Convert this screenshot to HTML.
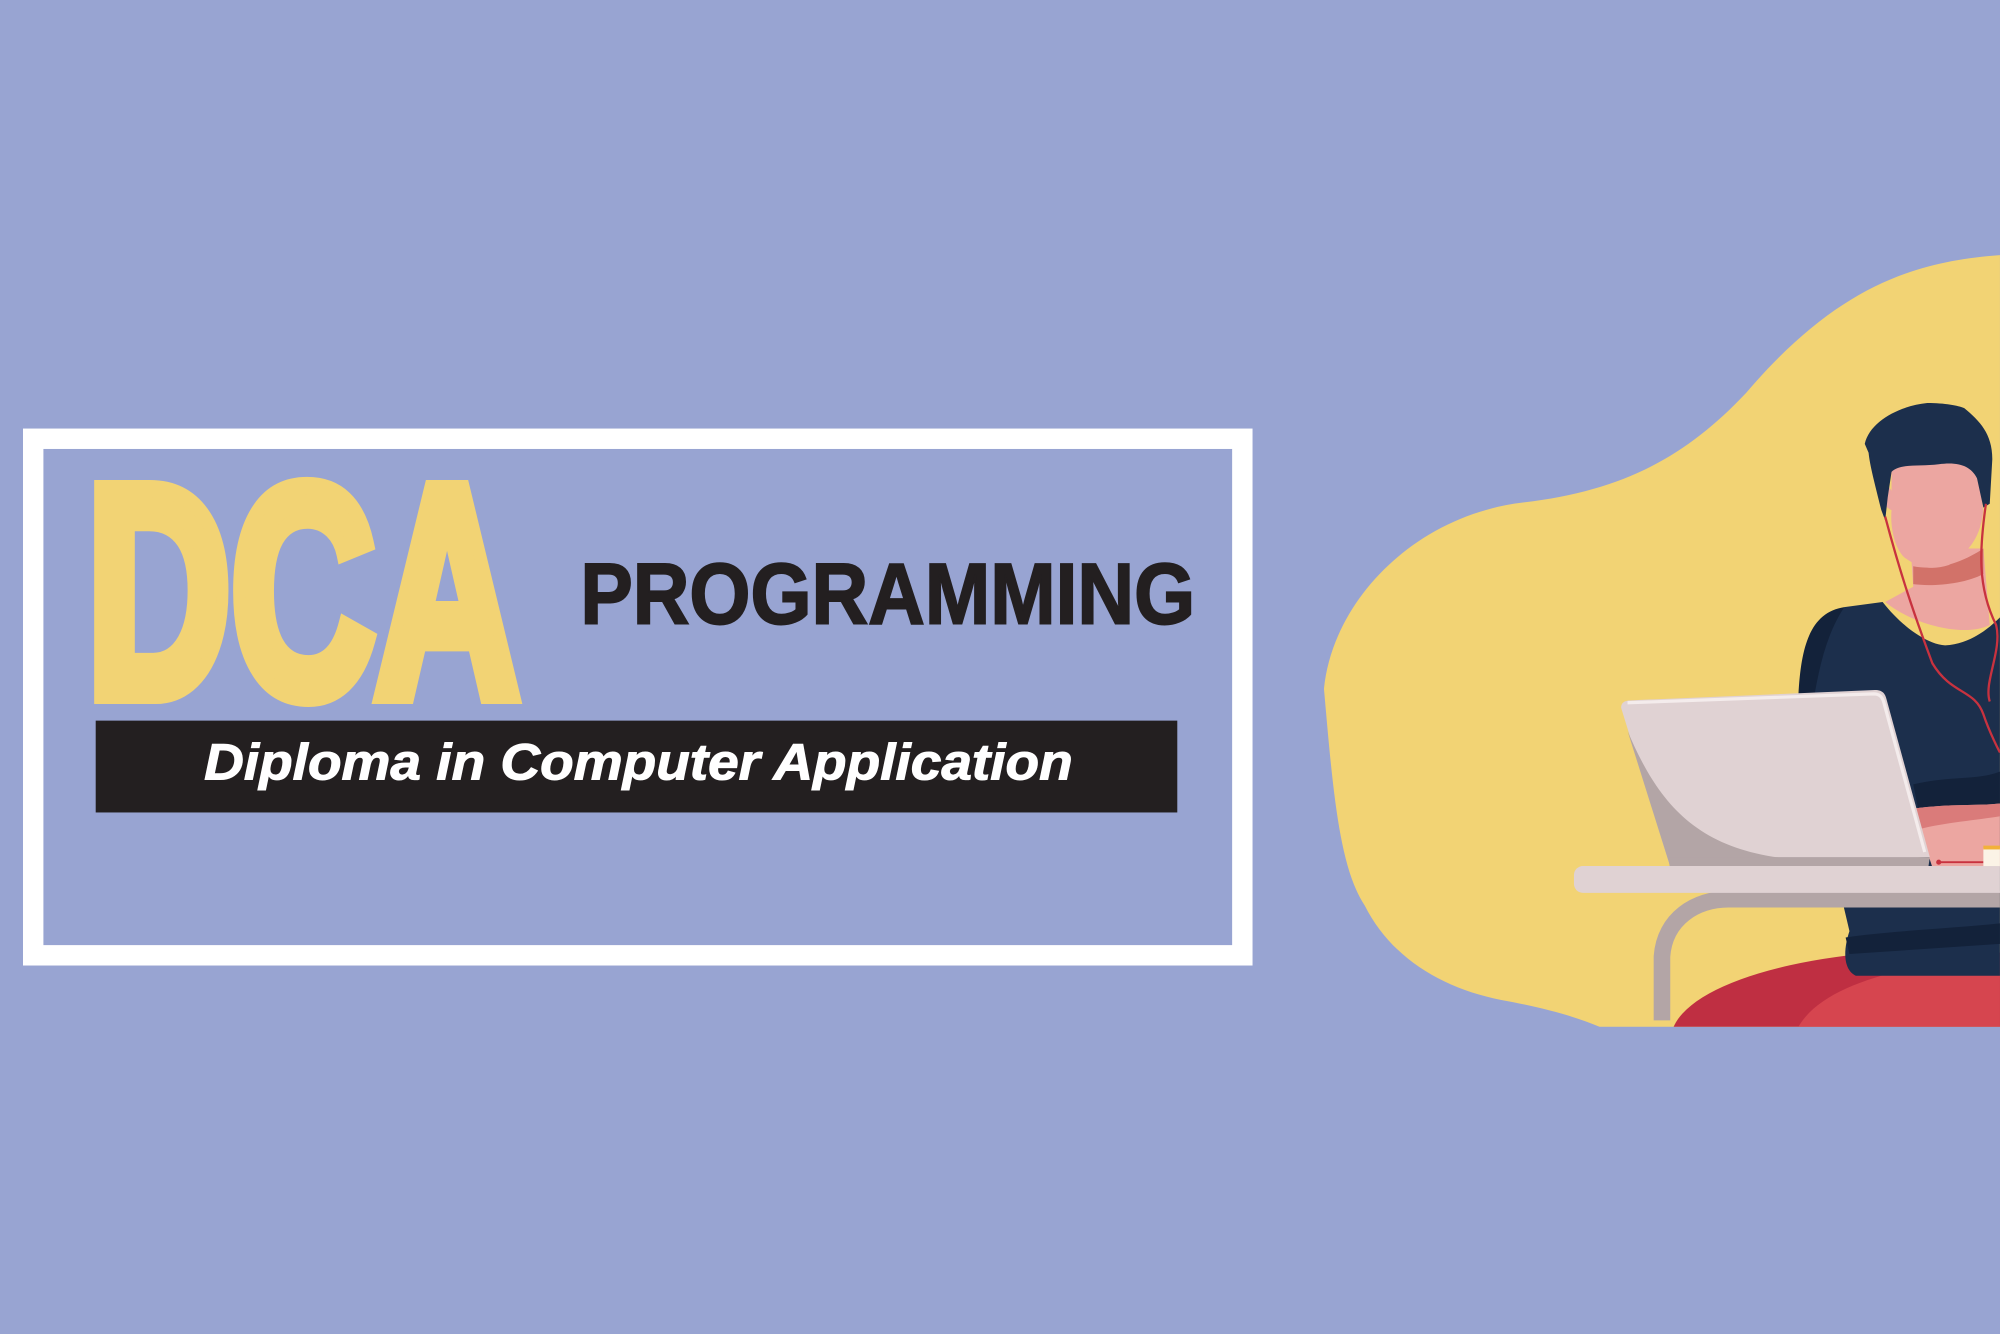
<!DOCTYPE html>
<html><head><meta charset="utf-8"><style>
html,body{margin:0;padding:0;background:#98A4D2;}
svg{display:block;width:2000px;height:1334px;}
</style></head><body>
<svg viewBox="0 0 1568 1045.9" xmlns="http://www.w3.org/2000/svg">
<rect width="1568" height="1046" fill="#98A4D2"/>
<rect x="26" y="344" width="948" height="405" fill="none" stroke="#fff" stroke-width="16"/>
<text x="68" y="545" font-family="Liberation Sans, sans-serif" font-weight="bold" font-size="235" fill="#F2D374" stroke="#F2D374" stroke-width="14" stroke-linejoin="miter" textLength="339" lengthAdjust="spacingAndGlyphs">DCA</text>
<text x="455" y="489" font-family="Liberation Sans, sans-serif" font-weight="bold" font-size="68" fill="#231F20" stroke="#231F20" stroke-width="1.5" textLength="482" lengthAdjust="spacingAndGlyphs">PROGRAMMING</text>
<rect x="75" y="565" width="848" height="72" fill="#231F20"/>
<text x="160" y="611" font-family="Liberation Sans, sans-serif" font-weight="bold" font-style="italic" font-size="40" fill="#fff" stroke="#fff" stroke-width="0.8" textLength="681" lengthAdjust="spacingAndGlyphs">Diploma in Computer Application</text>
<path d="M1568 200 C1500 205 1440 225 1369 308 C1320 360 1270 385 1194 394 C1110 404 1045 470 1038 540 C1045 620 1050 680 1070 710 C1090 750 1130 775 1177 784 C1210 790 1235 797 1254 805 L1568 805 Z" fill="#F2D374"/>
<clipPath id="c"><rect x="1000" y="190" width="568" height="615"/></clipPath>
<g clip-path="url(#c)">
<ellipse cx="1520" cy="815" rx="210" ry="70" fill="#BF2F42"/>
<path d="M1410 805 C1430 770 1500 755 1568 750 L1568 805 Z" fill="#D6454F"/>
<path d="M1498 430 L1555 430 L1560 490 C1540 500 1500 490 1478 472 L1500 460 Z" fill="#ECA6A1"/>
<path d="M1500 444 C1520 448 1540 440 1555 430 L1555 450 C1540 458 1515 460 1500 458 Z" fill="#D27269"/>
<path d="M1446 476 L1476 472 C1490 490 1510 505 1525 506 C1545 505 1560 492 1568 484 L1568 765 L1455 765 C1445 760 1445 745 1450 730 L1410 560 C1412 530 1415 495 1446 476 Z" fill="#1C2F4C"/>
<path d="M1446 476 C1420 480 1412 505 1410 545 L1420 560 C1425 530 1430 500 1446 476 Z" fill="#13223A"/>
<path d="M1500 615 C1530 608 1550 612 1568 605 L1568 640 L1505 640 Z" fill="#13223A"/>
<path d="M1447 735 C1480 730 1530 728 1568 724 L1568 740 L1450 748 Z" fill="#13223A"/>
<path d="M1500 634 C1530 630 1550 632 1568 630 L1568 680 L1515 680 Z" fill="#ECA6A1"/>
<path d="M1500 634 C1530 630 1550 632 1568 630 L1568 640 C1550 643 1525 645 1505 650 Z" fill="#DA7B7A"/>
<path d="M1483 360 C1500 355 1520 362 1548 357 L1555 400 C1553 420 1545 432 1528 443 C1515 447 1505 446 1493 437 C1484 428 1482 410 1483 400 C1478 398 1472 390 1474 386 C1476 380 1481 380 1483 385 Z" fill="#ECA6A1"/>
<path d="M1462 348 C1466 330 1490 318 1511 316 C1525 316 1535 318 1540 320 C1552 330 1562 340 1562 360 L1560 395 L1555 398 L1550 375 C1545 365 1535 362 1520 364 C1505 366 1490 363 1483 370 L1480 390 L1478 408 L1475 400 C1470 380 1466 365 1465 355 Z" fill="#1C2F4C"/>
<path d="M1478 405 C1490 450 1500 480 1515 520 C1530 545 1548 540 1555 560 C1560 575 1568 590 1568 590 M1557 395 C1552 430 1550 460 1565 490 C1570 510 1555 535 1560 550" fill="none" stroke="#C8323F" stroke-width="1.8"/>
<path d="M1568 705 L1355 705 C1330 705 1305 720 1303 750 L1303 800" fill="none" stroke="#B3A5A6" stroke-width="13"/>
<rect x="1234" y="679" width="400" height="21" rx="7" fill="#E0D2D3"/>
<path d="M1271 555 C1271 550 1275 549 1280 549 L1470 541 C1476 541 1478 544 1479 548 L1513 672 L1309 678 Z" fill="#E0D2D3"/>
<path d="M1276 573 L1309 678 L1400 673 C1330 665 1300 630 1276 573 Z" fill="#B3A5A6"/>
<path d="M1276 551 L1469 544 C1474 544 1476 547 1477 551 L1509 668" fill="none" stroke="#F4ECEC" stroke-width="2.5"/>
<path d="M1308 672 L1513 672 L1512 679 L1309 679 Z" fill="#B3A5A6"/>
<path d="M1520 676 L1555 676" stroke="#C8323F" stroke-width="1.5"/>
<circle cx="1520" cy="676" r="2" fill="#C8323F"/>
<rect x="1555" y="665" width="13" height="14" fill="#FBF3E6"/>
<rect x="1555" y="663" width="13" height="3" fill="#F2B13A"/>
</g>
</svg>
</body></html>
